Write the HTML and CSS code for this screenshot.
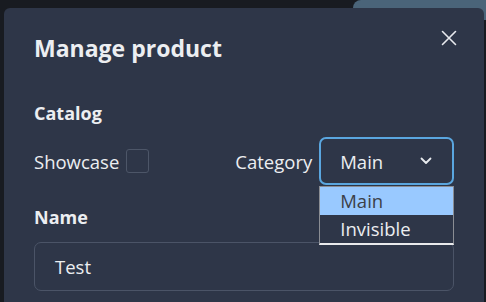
FILE: index.html
```html
<!DOCTYPE html>
<html>
<head>
<meta charset="utf-8">
<link rel="stylesheet" href="styles.css">
</head>
<body>
<div class="backdrop-tab"></div>
<div class="modal">
  <div class="modal-header">
    <h2 class="title">Manage product</h2>
    <button class="close" aria-label="Close">
      <svg width="16" height="16" viewBox="0 0 16 16"><path d="M1.5 1.5 L14.5 14.5 M14.5 1.5 L1.5 14.5" stroke="#e8eaee" stroke-width="1.6" stroke-linecap="round" fill="none"/></svg>
    </button>
  </div>
  <div class="section-label">Catalog</div>
  <div class="catalog-row">
    <label class="showcase">Showcase <span class="checkbox"></span></label>
    <div class="category">
      <span class="category-label">Category</span>
      <div class="select-wrap">
        <div class="select">
          <span>Main</span>
          <svg width="12" height="8" viewBox="0 0 12 8"><path d="M1.5 1.5 L6 6 L10.5 1.5" stroke="#e8eaee" stroke-width="1.8" fill="none" stroke-linecap="round" stroke-linejoin="round"/></svg>
        </div>
        <div class="options">
          <div class="option selected">Main</div>
          <div class="option">Invisible</div>
        </div>
      </div>
    </div>
  </div>
  <div class="section-label name-label">Name</div>
  <div class="input">Test</div>
</div>
</body>
</html>
```
FILE: styles.css
```css
html, body {
  margin: 0;
  height: 100%;
  overflow: hidden;
}
body {
  background: #181b21;
  font-family: "Open Sans", "Noto Sans", sans-serif;
  color: #eceef1;
  padding: 8px 2px 0 4px;
  box-sizing: border-box;
  position: relative;
}
.backdrop-tab {
  position: absolute;
  top: 0;
  left: 353px;
  width: 133px;
  height: 20px;
  background: #4a6479;
  border-radius: 8px 0 0 0;
}
.modal {
  position: relative;
  background: #2e3648;
  border-radius: 6px 6px 0 0;
  height: 294px;
  box-sizing: border-box;
  padding: 24px 30px 0 30px;
}
.modal-header {
  display: flex;
  justify-content: space-between;
  align-items: flex-start;
}
.title {
  margin: 0;
  font-size: 23px;
  font-weight: 700;
  line-height: 32px;
  color: #eceef1;
}
.close {
  background: none;
  border: 0;
  padding: 0;
  margin: -2px -3px 0 0;
  width: 16px;
  height: 16px;
  display: block;
}
.close svg { display: block; }
.section-label {
  font-weight: 700;
  font-size: 18px;
  line-height: 24px;
  margin-top: 37px;
}
.catalog-row {
  display: flex;
  align-items: center;
  margin-top: 12px;
}
.showcase {
  display: flex;
  align-items: center;
  gap: 7px;
  font-size: 18.5px;
}
.checkbox {
  width: 21px;
  height: 22px;
  border: 1.5px solid #4d5668;
  border-radius: 3px;
  display: inline-block;
}
.category {
  display: flex;
  align-items: center;
  margin-left: 86px;
  font-size: 18.5px;
  gap: 7px;
}
.select-wrap {
  position: relative;
}
.select {
  width: 135px;
  height: 48px;
  box-sizing: border-box;
  border: 2px solid #5aa6df;
  border-radius: 7px;
  display: flex;
  align-items: center;
  justify-content: space-between;
  padding: 0 20px 0 19px;
  font-size: 18.5px;
}
.options {
  position: absolute;
  top: 49px;
  left: 0;
  width: 135px;
  box-sizing: border-box;
  border: 1px solid #8a8d93;
  border-bottom: 2px solid #e9eaec;
  background: #2e3648;
  font-size: 18.5px;
  z-index: 5;
}
.option {
  height: 28px;
  line-height: 28px;
  padding-left: 20px;
}
.option.selected {
  background: #99c9ff;
  color: #3c4048;
}
.name-label {
  margin-top: 20px;
}
.input {
  margin-top: 13px;
  height: 49px;
  box-sizing: border-box;
  border: 1px solid #4b5467;
  border-radius: 7px;
  padding: 0 20px;
  display: flex;
  align-items: center;
  font-size: 18.5px;
}
```
